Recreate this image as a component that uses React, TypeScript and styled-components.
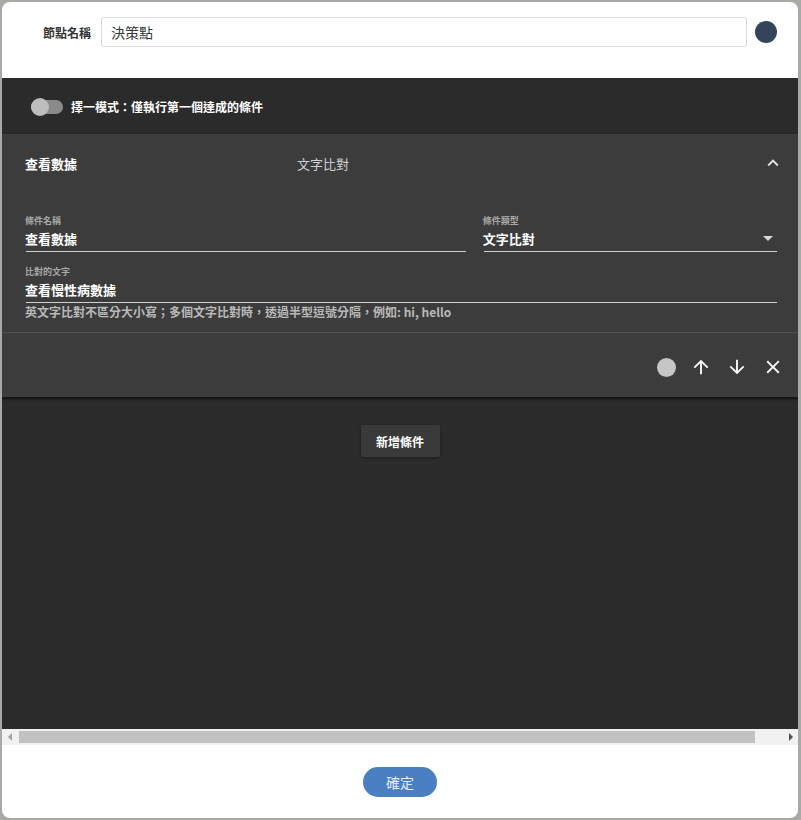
import styled, { createGlobalStyle } from 'styled-components';

const FONT = `"Noto Sans CJK TC", "Noto Sans", "Liberation Sans", sans-serif`;

const GlobalStyle = createGlobalStyle`
  html, body {
    margin: 0;
    padding: 0;
    background: #a9a9a6;
    font-family: ${FONT};
  }
  * {
    box-sizing: border-box;
  }
`;

const Modal = styled.div`
  margin: 2px 3px 2px 2px;
  height: 816px;
  background: #fff;
  border-radius: 8px;
  overflow: hidden;
  display: flex;
  flex-direction: column;
`;

const Header = styled.div`
  height: 76px;
  padding: 15px 21px 0 0;
  display: flex;
  align-items: flex-start;
  gap: 8px;
`;

const NameLabel = styled.label`
  width: 89px;
  height: 30px;
  display: flex;
  align-items: center;
  justify-content: flex-end;
  font-size: 12px;
  font-weight: 700;
  color: #333;
`;

const NameInput = styled.div`
  flex: 1;
  height: 30px;
  margin-left: 2px;
  padding: 0 9px;
  display: flex;
  align-items: center;
  border: 1px solid #dcdcdc;
  border-radius: 3px;
  font-size: 14px;
  color: #333;
`;

const ColorDot = styled.span<{ $color: string; $size: number }>`
  width: ${(p) => p.$size}px;
  height: ${(p) => p.$size}px;
  border-radius: 50%;
  background: ${(p) => p.$color};
  flex: none;
`;

const HeaderDot = styled(ColorDot)`
  margin-top: 4px;
`;

const Body = styled.div`
  flex: 1;
  background: #2b2b2b;
  display: flex;
  flex-direction: column;
  overflow: hidden;
`;

const ToggleRow = styled.div`
  height: 56px;
  padding-left: 29px;
  display: flex;
  align-items: center;
  gap: 8px;
  color: #fff;
  font-size: 12px;
  font-weight: 700;
`;

const Switch = styled.span`
  position: relative;
  width: 32px;
  height: 14px;
  margin-top: 2px;
  border-radius: 7px;
  background: #8a8a8a;

  &::after {
    content: '';
    position: absolute;
    left: 0;
    top: -2px;
    width: 18px;
    height: 18px;
    border-radius: 50%;
    background: #bdbdbd;
  }
`;

const Card = styled.div`
  background: #3c3c3c;
  box-shadow: 0 2px 2px rgba(0, 0, 0, 0.45), 0 1px 4px rgba(0, 0, 0, 0.3);
`;

const CardHead = styled.div`
  height: 58px;
  padding: 0 14px 0 23px;
  display: flex;
  align-items: center;
`;

const CardTitle = styled.div`
  width: 272px;
  font-size: 13px;
  font-weight: 700;
  color: #fff;
`;

const CardType = styled.div`
  flex: 1;
  font-size: 13px;
  color: #cfcfcf;
`;

const IconSvg = styled.svg<{ $size: number; $color?: string }>`
  width: ${(p) => p.$size}px;
  height: ${(p) => p.$size}px;
  fill: ${(p) => p.$color || '#fff'};
  flex: none;
`;

const DropIcon = styled.span`
  display: flex;
  margin-right: -3px;
`;

const Details = styled.div`
  padding: 23px 21px 12px 24px;
  display: flex;
  flex-direction: column;
  gap: 14px;
`;

const FieldRow = styled.div`
  display: grid;
  grid-template-columns: 3fr 2fr;
  gap: 18px;
`;

const Field = styled.div`
  display: flex;
  flex-direction: column;
`;

const FieldLabel = styled.div`
  margin-left: -1px;
  font-size: 9px;
  font-weight: 700;
  line-height: 11px;
  color: #a8a8a8;
`;

const FieldValue = styled.div`
  height: 26px;
  padding-bottom: 1px;
  display: flex;
  align-items: center;
  justify-content: space-between;
  border-bottom: 1px solid #cfcfcf;
  font-size: 13px;
  font-weight: 700;
  color: #fff;
  text-indent: -1px;
`;

const Helper = styled.div`
  margin-top: 1px;
  margin-left: -1px;
  font-size: 12px;
  font-weight: 700;
  line-height: 16px;
  color: #b9b9b9;
`;

const Actions = styled.div`
  height: 65px;
  padding: 4px 14px 0 0;
  border-top: 1px solid #525252;
  display: flex;
  align-items: center;
  justify-content: flex-end;
  gap: 14px;
`;

const ActionButton = styled.span`
  width: 22px;
  height: 22px;
  display: flex;
  align-items: center;
  justify-content: center;
`;

const AddWrap = styled.div`
  padding-top: 28px;
  display: flex;
  justify-content: center;
`;

const AddButton = styled.button`
  width: 79px;
  height: 32px;
  border: none;
  border-radius: 2px;
  background: #3a3a3a;
  box-shadow: 0 1px 3px rgba(0, 0, 0, 0.35);
  color: #fff;
  font-family: ${FONT};
  font-size: 12px;
  font-weight: 700;
`;

const Spacer = styled.div`
  flex: 1;
`;

const Scrollbar = styled.div`
  height: 16px;
  background: #f1f1f1;
  display: flex;
  align-items: center;
`;

const ScrollArrow = styled.span<{ $dir: 'left' | 'right'; $color: string }>`
  width: 15px;
  display: flex;
  justify-content: center;

  &::before {
    content: '';
    border-top: 4px solid transparent;
    border-bottom: 4px solid transparent;
    ${(p) =>
      p.$dir === 'left'
        ? `border-right: 4px solid ${p.$color};`
        : `border-left: 4px solid ${p.$color};`}
  }
`;

const ScrollThumb = styled.span`
  height: 12px;
  margin-left: 2px;
  width: 736px;
  background: #c1c1c1;
`;

const Footer = styled.div`
  height: 73px;
  padding-top: 22px;
  display: flex;
  justify-content: center;
`;

const ConfirmButton = styled.button`
  width: 74px;
  height: 30px;
  border: none;
  border-radius: 15px;
  background: #4a80c1;
  color: #e3ebf6;
  font-family: ${FONT};
  font-size: 14px;
`;

const Icon = ({ d, size, color }: { d: string; size: number; color?: string }) => (
  <IconSvg viewBox="0 0 24 24" $size={size} $color={color}>
    <path d={d} />
  </IconSvg>
);

const ICONS = {
  expandLess: 'M12 8l-6 6 1.41 1.41L12 10.83l4.59 4.58L18 14z',
  dropDown: 'M7 10l5 5 5-5z',
  up: 'M4 12l1.41 1.41L11 7.83V20h2V7.83l5.58 5.59L20 12l-8-8-8 8z',
  down: 'M20 12l-1.41-1.41L13 16.17V4h-2v12.17l-5.58-5.59L4 12l8 8 8-8z',
  close:
    'M19 6.41L17.59 5 12 10.59 6.41 5 5 6.41 10.59 12 5 17.59 6.41 19 12 13.41 17.59 19 19 17.59 13.41 12z',
};

function App() {
  return (
    <>
      <GlobalStyle />
      <Modal>
        <Header>
          <NameLabel>節點名稱</NameLabel>
          <NameInput>決策點</NameInput>
          <HeaderDot $color="#34445a" $size={22} />
        </Header>

        <Body>
          <ToggleRow>
            <Switch />
            擇一模式：僅執行第一個達成的條件
          </ToggleRow>

          <Card>
            <CardHead>
              <CardTitle>查看數據</CardTitle>
              <CardType>文字比對</CardType>
              <Icon d={ICONS.expandLess} size={22} color="#e0e0e0" />
            </CardHead>
            <Details>
              <FieldRow>
                <Field>
                  <FieldLabel>條件名稱</FieldLabel>
                  <FieldValue>查看數據</FieldValue>
                </Field>
                <Field>
                  <FieldLabel>條件類型</FieldLabel>
                  <FieldValue>
                    文字比對
                    <DropIcon>
                      <Icon d={ICONS.dropDown} size={24} color="#d6d6d6" />
                    </DropIcon>
                  </FieldValue>
                </Field>
              </FieldRow>
              <Field>
                <FieldLabel>比對的文字</FieldLabel>
                <FieldValue>查看慢性病數據</FieldValue>
                <Helper>英文字比對不區分大小寫；多個文字比對時，透過半型逗號分隔，例如: hi, hello</Helper>
              </Field>
            </Details>
            <Actions>
              <ColorDot $color="#c6c6c6" $size={19} />
              <ActionButton>
                <Icon d={ICONS.up} size={22} />
              </ActionButton>
              <ActionButton>
                <Icon d={ICONS.down} size={22} />
              </ActionButton>
              <ActionButton>
                <Icon d={ICONS.close} size={22} />
              </ActionButton>
            </Actions>
          </Card>

          <AddWrap>
            <AddButton>新增條件</AddButton>
          </AddWrap>
          <Spacer />
        </Body>

        <Scrollbar>
          <ScrollArrow $dir="left" $color="#a3a3a3" />
          <ScrollThumb />
          <Spacer />
          <ScrollArrow $dir="right" $color="#505050" />
        </Scrollbar>

        <Footer>
          <ConfirmButton>確定</ConfirmButton>
        </Footer>
      </Modal>
    </>
  );
}

export default App;
